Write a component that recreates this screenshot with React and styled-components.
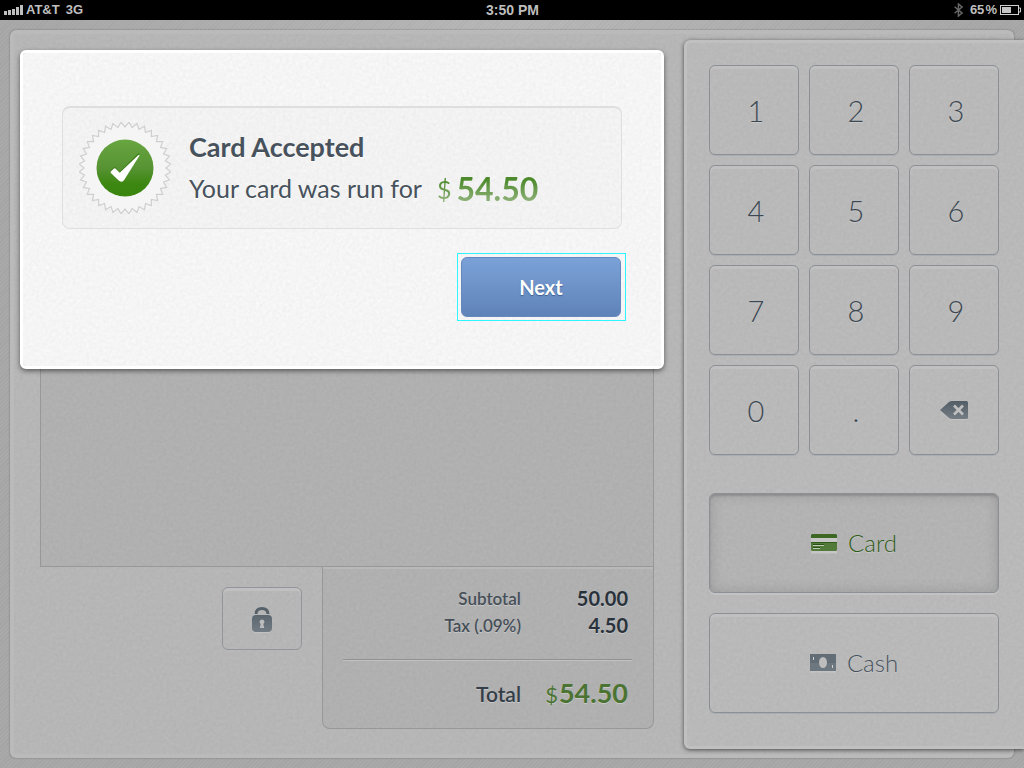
// iPad register: payment accepted
import React from 'react'
import styled, { createGlobalStyle } from 'styled-components'

const grain = (opacity) => `url("data:image/svg+xml,%3Csvg xmlns='http://www.w3.org/2000/svg' width='300' height='300'%3E%3Cfilter id='n'%3E%3CfeTurbulence type='fractalNoise' baseFrequency='.3' numOctaves='4' stitchTiles='stitch'/%3E%3CfeColorMatrix values='0 0 0 0 .2 0 0 0 0 .2 0 0 0 0 .2 .9 .9 0 0 -.5'/%3E%3C/filter%3E%3Crect width='300' height='300' filter='url(%23n)' opacity='${opacity}'/%3E%3C/svg%3E")`

const keys = ['1', '2', '3', '4', '5', '6', '7', '8', '9', '0', '.']

// points of the zigzag ring around the check mark
const ring = (teeth, outer, inner) => {
    const points = []
    for (let i = 0; i < teeth * 2; i++) {
        const r = i % 2 ? inner : outer
        const a = Math.PI * (i + 1) / teeth - Math.PI / 2
        points.push(`${(46 + r * Math.cos(a)).toFixed(2)},${(46 + r * Math.sin(a)).toFixed(2)}`)
    }
    return points.join(' ')
}

const SignalIcon = () => (
    <svg width='19' height='10' fill='#bebebe' aria-hidden='true'>
        <path d='M0 6h3v4H0zM4 5h3v5H4zM8 4h3v6H8zM12 2h3v8h-3zM16 0h3v10h-3z'/>
    </svg>
)

const BluetoothIcon = () => (
    <svg width='9' height='14' fill='none' stroke='#666' strokeWidth='1.5' aria-hidden='true'>
        <path d='M.6 3.8l7.4 6.2-3.6 3V1L8 4 .6 10.2'/>
    </svg>
)

const BatteryIcon = () => (
    <svg width='21' height='10' aria-hidden='true'>
        <rect x='.5' y='.5' width='18' height='9' fill='none' stroke='#d0d0d0'/>
        <rect x='2' y='2' width='9' height='6' fill='#c4c4c4'/>
        <path d='M19 3h1.5v4H19' fill='none' stroke='#d0d0d0'/>
    </svg>
)

const Seal = () => (
    <svg width='92' height='92' aria-hidden='true'>
        <defs>
            <linearGradient id='seal' x1='0' y1='0' x2='0' y2='1'>
                <stop offset='0' stopColor='#68a641'/>
                <stop offset='.5' stopColor='#579333'/>
                <stop offset='.78' stopColor='#3c8711'/>
                <stop offset='1' stopColor='#3a850e'/>
            </linearGradient>
        </defs>
        <polygon points={ring(36, 46, 41)} fill='#f5f5f5' stroke='#cfcfcf' strokeWidth='1.2'/>
        <circle cx='46' cy='46' r='28.5' fill='url(#seal)'/>
        <path d='M31.6 48.6l3.2-3.2q.8-.6 1.7 0l4 4.6L59 31.6q1.3-1 1.5.6L46 56q-4 5.5-7 2.5l-7.4-8.4q-.6-.7 0-1.5z' fill='#2d6d0b' opacity='.6'/>
        <path d='M31.8 49.6l3.2-3q.8-.6 1.7.1l4 4.1L59.2 33.2q1.3-.9 1.2.6L45 58.2q-2.6 2.8-5.4.4l-7.700-7.600q-.7-.7-.1-1.400z' fill='#fff'/>
    </svg>
)

const LockIcon = () => (
    <svg width='22' height='26' aria-hidden='true'>
        <defs>
            <linearGradient id='lock' x1='0' y1='0' x2='0' y2='1'>
                <stop offset='0' stopColor='#5b666f'/>
                <stop offset='1' stopColor='#717b83'/>
            </linearGradient>
        </defs>
        <path d='M5 7q.3-5.500 6-5.500T17 7' fill='none' stroke='#56616a' strokeWidth='3'/>
        <rect x='1' y='9' width='20' height='17' rx='4' fill='#c2c2c2'/>
        <rect x='1' y='8' width='20' height='17' rx='4' fill='url(#lock)'/>
        <path d='M11 12.500a2.500 2.500 0 0 1 1.300 4.600l.9 4H8.800l.9-4A2.500 2.500 0 0 1 11 12.500z' fill='#bcbcbc'/>
    </svg>
)

const DeleteIcon = () => (
    <svg width='28' height='19' aria-hidden='true'>
        <defs>
            <linearGradient id='del' x1='0' y1='0' x2='0' y2='1'>
                <stop offset='0' stopColor='#525d66'/>
                <stop offset='1' stopColor='#747c84'/>
            </linearGradient>
        </defs>
        <path d='M0 10l9-8q1.500-1 3-1h14.500q1.500 0 1.500 1.500v15q0 1.500-1.500 1.500H12q-1.500 0-3-1z' fill='#c4c4c4'/>
        <path d='M0 9l9-8q1.500-1 3-1h14.500Q28 0 28 1.500v15q0 1.500-1.500 1.500H12q-1.500 0-3-1z' fill='url(#del)'/>
        <path d='M14 4.500l9 9M23 4.500l-9 9' stroke='#c0c0c0' strokeWidth='2.600'/>
    </svg>
)

const CardIcon = () => (
    <svg width='26' height='20' aria-hidden='true'>
        <path d='M0 4h26v4H0zM0 17h26v2.500H0z' fill='#c6c6c6'/>
        <path d='M1 0h24l1 1v3H0V1z' fill='#3c6823'/>
        <path d='M0 8h26v8l-1 1H1l-1-1z' fill='#527a3b'/>
        <path d='M0 8h26v1H0z' fill='#315c18'/>
        <path d='M2 10h11v1H2zM2 13h7v1H2z' fill='#2c5015'/>
        <path d='M2 11h11v1H2zM2 14h7v1H2z' fill='#bccbb3'/>
    </svg>
)

const CashIcon = () => (
    <svg width='26' height='20' aria-hidden='true'>
        <path d='M0 17h26v1.500H0z' fill='#c4c4c4'/>
        <path d='M0 0h26v17H0z' fill='#626d76'/>
        <path d='M0 9h26v8H0z' fill='#6d777f'/>
        <ellipse cx='13' cy='8.500' rx='4' ry='5.500' fill='#bdbdbd'/>
        <path d='M3 3h1v3H3zM22 11h1v3h-1z' fill='#d0d0d0'/>
    </svg>
)

export default function App () {
    return (
        <Page>
            <Global/>
            <StatusBar>
                <Carrier>
                    <SignalIcon/>
                    <span>AT&amp;T</span>
                    <Network>3G</Network>
                </Carrier>
                <Clock>3:50 PM</Clock>
                <Power>
                    <BluetoothIcon/>
                    <Percent>65&#8202;%</Percent>
                    <BatteryIcon/>
                </Power>
            </StatusBar>
            <Desk>
                <Register>
                    <Sale>
                        <Cart/>
                        <SaleFooter>
                            <LockButton aria-label='Unlock'><LockIcon/></LockButton>
                            <Totals>
                                <table>
                                    <tbody>
                                        <tr>
                                            <th scope='row'>Subtotal</th>
                                            <td>50.00</td>
                                        </tr>
                                        <tr>
                                            <th scope='row'>Tax (.09%)</th>
                                            <td>4.50</td>
                                        </tr>
                                    </tbody>
                                    <tfoot>
                                        <tr>
                                            <th scope='row'>Total</th>
                                            <td><span>$</span>54.50</td>
                                        </tr>
                                    </tfoot>
                                </table>
                            </Totals>
                        </SaleFooter>
                        {/* 支付结果 */}
                        <Modal role='dialog' aria-labelledby='result'>
                            <Result>
                                <Seal/>
                                <div>
                                    <Title id='result'>Card Accepted</Title>
                                    <Message>
                                        Your card was run for
                                        <Amount><Dollar>$</Dollar>54.50</Amount>
                                    </Message>
                                </div>
                            </Result>
                            <FocusFrame>
                                <NextButton>Next</NextButton>
                            </FocusFrame>
                        </Modal>
                    </Sale>
                    <Keypad>
                        <Keys>
                            {keys.map(k => <NumberKey key={k}>{k}</NumberKey>)}
                            <Key aria-label='Delete'><DeleteIcon/></Key>
                        </Keys>
                        <Methods>
                            <Method $active><CardIcon/>Card</Method>
                            <Method><CashIcon/>Cash</Method>
                        </Methods>
                    </Keypad>
                </Register>
            </Desk>
        </Page>
    )
}

const Global = createGlobalStyle`
    * {
        box-sizing: border-box;
    }
    body {
        margin: 0;
        font-family: Lato, 'Liberation Sans', sans-serif;
        color: #47525c;
    }
    button {
        font-family: inherit;
        padding: 0;
        cursor: pointer;
    }
`

const Page = styled.div`
    display: flex;
    flex-direction: column;
    min-height: 100vh;
    overflow: hidden;
    background:
        repeating-linear-gradient(135deg, rgba(0, 0, 0, .03) 0 1px, transparent 1px 3px),
        radial-gradient(ellipse at 50% 0, #b8b8b8, #a9a9a9 65%);
`

const StatusBar = styled.header`
    display: grid;
    grid-template-columns: 1fr auto 1fr;
    align-items: center;
    height: 20px;
    padding: 0 3px 1px 4px;
    background: #000;
    color: #bebebe;
    font: bold 13px/18px 'Liberation Sans', Arial, sans-serif;
`

const Carrier = styled.div`
    display: flex;
    align-items: center;
    gap: 3px;
`

const Network = styled.span`
    margin-left: 3px;
`

const Clock = styled.div`
    font-size: 14px;
`

const Power = styled.div`
    display: flex;
    align-items: center;
    justify-content: flex-end;
    gap: 3px;
`

const Percent = styled.span`
    margin-left: 4px;
`

const Desk = styled.main`
    flex: 1;
    display: flex;
    padding: 10px;
`

const Register = styled.div`
    flex: 1;
    display: grid;
    grid-template-columns: 1fr 330px;
    background: ${grain(.13)} #b9b9b9;
    border-radius: 6px;
    box-shadow: 0 0 2px rgba(0, 0, 0, .35), inset 0 0 0 4px #bababa;
`

const Sale = styled.section`
    position: relative;
    display: flex;
    flex-direction: column;
    padding: 60px 30px 29px;
`

const Cart = styled.div`
    flex: 1;
    border: 1px solid #989898;
    background: rgba(0, 0, 0, .03);
`

const SaleFooter = styled.div`
    display: flex;
    justify-content: flex-end;
    align-items: flex-start;
    gap: 20px;
`

const LockButton = styled.button`
    display: flex;
    align-items: center;
    justify-content: center;
    width: 80px;
    height: 63px;
    margin-top: 20px;
    padding-top: 3px;
    border: 1px solid #92969a;
    border-radius: 6px;
    background: transparent;
    box-shadow: inset 0 3px 0 #c0c0c0;
`

const Totals = styled.div`
    width: 332px;
    padding: 18px 21px 0 20px;
    border: 1px solid #989898;
    border-top: 0;
    border-radius: 0 0 8px 8px;
    background: rgba(0, 0, 0, .03);
    box-shadow: inset 0 2px 0 #b9b9b9;

    table {
        width: 100%;
        border-spacing: 0;
        text-shadow: 0 1px 0 #c8c8c8;
    }
    th, td {
        height: 27px;
        padding: 0;
        text-align: right;
        font-weight: 600;
    }
    th {
        font-size: 17px;
        line-height: 27px;
        color: #464f58;
    }
    td {
        width: 111px;
        padding-right: 4px;
        font-size: 20px;
        line-height: 27px;
        font-weight: 700;
        color: #29323b;
    }
    tbody tr:last-child > * {
        height: 47px;
        padding-bottom: 20px;
    }
    tfoot th, tfoot td {
        height: 69px;
        padding-bottom: 2px;
        border-top: 1px solid #919191;
        box-shadow: inset 0 1px 0 #c2c2c2;
    }
    tfoot th {
        font-size: 21px;
        color: #343e48;
    }
    tfoot td {
        font-size: 27px;
        color: #4b7332;
    }
    tfoot span {
        margin-right: 1px;
        font-size: 22px;
        font-weight: 400;
    }
`

const Modal = styled.div`
    position: absolute;
    top: 20px;
    left: 10px;
    right: 20px;
    display: flex;
    flex-direction: column;
    align-items: flex-end;
    padding: 53px 39px 45px;
    border: 3px solid #fff;
    border-radius: 6px;
    background: ${grain(.08)} #f9f9f9;
    background-clip: padding-box;
    box-shadow: 0 2px 5px rgba(0, 0, 0, .5);
`

const Result = styled.div`
    display: flex;
    align-items: center;
    gap: 18px;
    width: 100%;
    height: 123px;
    padding: 0 16px;
    border: 1px solid #dfdfdf;
    border-top: 2px solid #dedede;
    border-radius: 8px;
    background: rgba(0, 0, 0, .01);
`

const Title = styled.h1`
    margin: 0;
    font-size: 27px;
    line-height: 40px;
    font-weight: 700;
    text-shadow: 0 1px 0 #fff;
`

const Message = styled.p`
    display: flex;
    align-items: center;
    gap: 15px;
    margin: 0;
    font-size: 25px;
    line-height: 40px;
    text-shadow: 0 1px 0 #fff;
`

const Amount = styled.span`
    display: flex;
    align-items: center;
    gap: 5px;
    padding-top: 2px;
    font-size: 32px;
    font-weight: 700;
    text-shadow: none;
    color: transparent;
    background: linear-gradient(#4c8a2b 30%, #8db077 80%);
    background-clip: text;
`

const Dollar = styled.span`
    font-size: 25px;
    font-weight: 400;
`

const FocusFrame = styled.div`
    margin: 24px -4px 0 0;
    padding: 3px 4px 3px 3px;
    border: 1px solid #2cf6ff;
`

const NextButton = styled.button`
    display: block;
    width: 160px;
    height: 60px;
    border: 1px solid #6488bf;
    border-radius: 6px;
    background: linear-gradient(#7ba2d8, #5f83b8);
    color: #fff;
    font-size: 20px;
    font-weight: 700;
    text-shadow: 0 1px 1px #3d5e8e;
`

const Keypad = styled.aside`
    margin: 10px -10px 9px 0;
    padding: 22px 25px 22px 22px;
    border: 3px solid #c0c0c0;
    border-right: 0;
    border-radius: 6px 0 0 6px;
    background: ${grain(.13)} #bcbcbc;
    background-clip: padding-box;
    box-shadow: 0 1px 4px rgba(0, 0, 0, .6);
`

const Keys = styled.div`
    display: grid;
    grid-template-columns: repeat(3, 1fr);
    gap: 10px;
`

const Key = styled.button`
    display: flex;
    align-items: center;
    justify-content: center;
    height: 90px;
    border: 1px solid #8c9095;
    border-radius: 6px;
    background: transparent;
    box-shadow: inset 0 3px 0 #c0c0c0, 0 1px 0 #a9adb1;
    color: #3c4852;
    text-shadow: 0 1px 0 #c8c8c8;
`

const NumberKey = styled(Key)`
    padding-left: 4px;
    font-size: 29px;
    font-weight: 300;
`

const Methods = styled.div`
    display: grid;
    gap: 20px;
    margin-top: 38px;
`

const Method = styled(Key)`
    gap: 11px;
    height: 100px;
    padding-bottom: 2px;
    font-size: 24px;
    font-weight: 300;
    color: ${props => props.$active ? '#2f5a17' : '#46515b'};
    background: ${props => props.$active ? 'rgba(0, 0, 0, .03)' : 'transparent'};
    box-shadow: ${props => props.$active
        ? 'inset 0 2px 2px rgba(0, 0, 0, .15), inset 0 0 14px rgba(0, 0, 0, .15), 0 2px 0 #c2c2c2'
        : 'inset 0 3px 0 #c0c0c0, 0 1px 0 #a9adb1'};

    svg {
        margin-top: 3px;
    }
`
